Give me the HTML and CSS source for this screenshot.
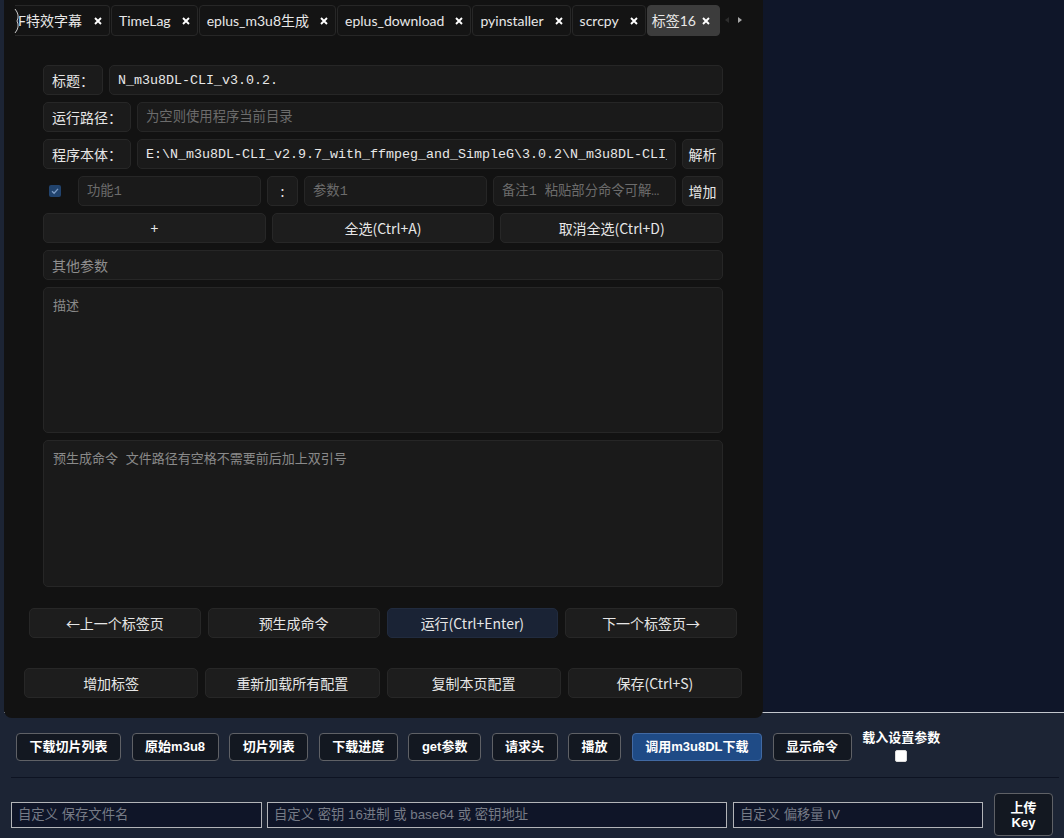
FILE: index.html
```html
<!DOCTYPE html>
<html lang="zh-CN">
<head>
<meta charset="utf-8">
<title>N_m3u8DL-CLI</title>
<link rel="stylesheet" href="styles.css">
</head>
<body>
<div class="page">
  <div class="viewer"></div>
  <div class="toolbar">
    <button class="tb">下载切片列表</button>
    <button class="tb">原始m3u8</button>
    <button class="tb">切片列表</button>
    <button class="tb">下载进度</button>
    <button class="tb">get参数</button>
    <button class="tb">请求头</button>
    <button class="tb">播放</button>
    <button class="tb primary">调用m3u8DL下载</button>
    <button class="tb">显示命令</button>
    <label class="load"><span>载入设置参数</span><input type="checkbox" class="wbox"></label>
  </div>
  <hr class="sep">
  <div class="keys">
    <input class="key k1" placeholder="自定义 保存文件名">
    <input class="key k2" placeholder="自定义 密钥 16进制 或 base64 或 密钥地址">
    <input class="key k3" placeholder="自定义 偏移量 IV">
    <button class="tb upload">上传<br>Key</button>
  </div>
</div>

<div class="dialog">
  <div class="tabbar">
    <svg class="edge" width="6" height="26" viewBox="0 0 6 26"><path d="M1 1 Q6 7 3 13 Q6 19 1 25" fill="none" stroke="#c8c8c8" stroke-width="1"/></svg>
    <div class="tabs">
      <div class="tab cut"><span>F特效字幕</span><svg class="x" width="8" height="8" viewBox="0 0 8 8"><path d="M1 1L7 7M7 1L1 7"/></svg></div>
      <div class="tab"><span>TimeLag</span><svg class="x" width="8" height="8" viewBox="0 0 8 8"><path d="M1 1L7 7M7 1L1 7"/></svg></div>
      <div class="tab"><span>eplus_m3u8生成</span><svg class="x" width="8" height="8" viewBox="0 0 8 8"><path d="M1 1L7 7M7 1L1 7"/></svg></div>
      <div class="tab"><span>eplus_download</span><svg class="x" width="8" height="8" viewBox="0 0 8 8"><path d="M1 1L7 7M7 1L1 7"/></svg></div>
      <div class="tab"><span>pyinstaller</span><svg class="x" width="8" height="8" viewBox="0 0 8 8"><path d="M1 1L7 7M7 1L1 7"/></svg></div>
      <div class="tab"><span>scrcpy</span><svg class="x" width="8" height="8" viewBox="0 0 8 8"><path d="M1 1L7 7M7 1L1 7"/></svg></div>
      <div class="tab active"><span>标签16</span><svg class="x" width="8" height="8" viewBox="0 0 8 8"><path d="M1 1L7 7M7 1L1 7"/></svg></div>
    </div>
    <div class="arrows">
      <svg width="4" height="6" viewBox="0 0 4 6"><path d="M4 0L0 3L4 6Z" fill="#2e2e2e"/></svg>
      <svg width="4" height="6" viewBox="0 0 4 6"><path d="M0 0L4 3L0 6Z" fill="#a8a8a8"/></svg>
    </div>
  </div>

  <div class="form">
    <div class="row">
      <span class="lbl">标题：</span>
      <input class="inp mono" value="N_m3u8DL-CLI_v3.0.2.">
    </div>
    <div class="row">
      <span class="lbl">运行路径：</span>
      <input class="inp mono" placeholder="为空则使用程序当前目录">
    </div>
    <div class="row">
      <span class="lbl">程序本体：</span>
      <input class="inp mono" value="E:\N_m3u8DL-CLI_v2.9.7_with_ffmpeg_and_SimpleG\3.0.2\N_m3u8DL-CLI_v3.0.2.exe">
      <button class="btn small">解析</button>
    </div>
    <div class="row params">
      <span class="chk"><svg width="12" height="12" viewBox="0 0 12 12"><rect x="0" y="0" width="12" height="12" rx="2" fill="#21436d"/><path d="M3 6.2L5.1 8.2L9 3.9" fill="none" stroke="#7d9cc4" stroke-width="1.3"/></svg></span>
      <input class="inp mono" placeholder="功能1">
      <span class="lbl colon">:</span>
      <input class="inp mono" placeholder="参数1">
      <input class="inp mono ell" placeholder="备注1 粘贴部分命令可解析参数">
      <button class="btn small">增加</button>
    </div>
    <div class="row three">
      <button class="btn">+</button>
      <button class="btn">全选(Ctrl+A)</button>
      <button class="btn">取消全选(Ctrl+D)</button>
    </div>
    <div class="row">
      <input class="inp other" placeholder="其他参数">
    </div>
    <textarea class="area a1" placeholder="描述"></textarea>
    <textarea class="area a2" placeholder="预生成命令 文件路径有空格不需要前后加上双引号"></textarea>
  </div>

  <div class="nav">
    <button class="btn">←上一个标签页</button>
    <button class="btn">预生成命令</button>
    <button class="btn run">运行(Ctrl+Enter)</button>
    <button class="btn">下一个标签页→</button>
  </div>
  <div class="actions">
    <button class="btn">增加标签</button>
    <button class="btn">重新加载所有配置</button>
    <button class="btn">复制本页配置</button>
    <button class="btn">保存(Ctrl+S)</button>
  </div>
</div>
</body>
</html>
```

FILE: styles.css
```css
* { box-sizing: border-box; }

html, body {
  margin: 0;
  padding: 0;
}

body {
  width: 1064px;
  height: 838px;
  overflow: hidden;
  background: #1c2434;
  font-family: "Liberation Sans", "Noto Sans CJK SC", sans-serif;
  position: relative;
}

/* ---------- page underneath ---------- */
.viewer {
  margin-left: 4px;
  height: 713px;
  background: #0f1629;
  border-bottom: 1px solid #c3c7cd;
}

.toolbar {
  display: flex;
  align-items: flex-start;
  gap: 10.6px;
  padding: 20px 0 0 16px;
}

.tb {
  height: 28px;
  padding: 0 12.5px;
  background: #131821;
  border: 1px solid #5f6166;
  border-radius: 4px;
  color: #ffffff;
  font: bold 13px/26px "Liberation Sans", "Noto Sans CJK SC", sans-serif;
  white-space: nowrap;
}

.tb.primary {
  background: #1f4b86;
  border-color: #4169a3;
}

.load {
  display: flex;
  flex-direction: column;
  align-items: center;
  margin-top: -3px;
  color: #ffffff;
  font: bold 13px/16px "Liberation Sans", "Noto Sans CJK SC", sans-serif;
}

.wbox {
  appearance: none;
  -webkit-appearance: none;
  width: 12px;
  height: 12px;
  margin: 4px 0 0 0;
  background: #ffffff;
  border: 1px solid #dcdcdc;
  border-radius: 2px;
}

.sep {
  margin: 15px 5px 0 11px;
  border: 0;
  border-top: 1px solid #0d1322;
  height: 0;
}

.keys {
  display: flex;
  align-items: center;
  padding: 15px 0 0 11px;
}

.key {
  height: 26px;
  background: #0f1528;
  border: 1px solid #b2b4b8;
  padding: 0 6px;
  color: #d0d0d0;
  font: 13.33px "Liberation Sans", "Noto Sans CJK SC", sans-serif;
  outline: none;
}

.key::placeholder { color: #767b86; }

.k1 { width: 251px; }
.k2 { width: 460px; margin-left: 5px; }
.k3 { width: 250px; margin-left: 6px; }

.upload {
  width: 59px;
  height: 43px;
  margin-left: 11px;
  padding: 0;
  line-height: 15px;
}

/* ---------- floating dialog ---------- */
.dialog {
  position: absolute;
  left: 4px;
  top: 0;
  width: 759px;
  height: 718px;
  background: #121212;
  border-radius: 0 0 8px 8px;
  font-family: "Noto Sans CJK SC", "Noto Sans", sans-serif;
  color: #e4e4e4;
}

.tabbar {
  position: relative;
  display: flex;
  align-items: center;
  height: 31px;
  margin-top: 5px;
}

.edge {
  position: absolute;
  left: 10px;
  top: 3px;
}

.tabs {
  display: flex;
  gap: 1px;
  margin-left: 11px;
  width: 706px;
  height: 31px;
  overflow: hidden;
}

.tab {
  flex: none;
  display: flex;
  align-items: center;
  gap: 11px;
  height: 31px;
  padding: 0 7px 0 7px;
  background: #141414;
  border: 1px solid #272727;
  border-radius: 4px;
  font-family: Lato, "Noto Sans CJK SC", sans-serif;
  font-size: 14px;
  line-height: 29px;
  color: #e8e8e8;
  white-space: nowrap;
}

.tab.cut {
  border-left: 0;
  border-radius: 0 4px 4px 0;
  padding-left: 3px;
  gap: 12px;
}

.tab.active {
  background: #3c3c3c;
  border-color: #3c3c3c;
  gap: 6px;
  padding: 0 9px 0 4px;
}

.x path {
  stroke: #ffffff;
  stroke-width: 1.9;
  fill: none;
}

.arrows {
  display: flex;
  align-items: center;
  gap: 9px;
  margin-left: 4px;
  margin-top: -2px;
}

.form {
  display: flex;
  flex-direction: column;
  gap: 7px;
  padding: 29px 40px 0 39px;
}

.row {
  display: flex;
  gap: 6px;
  height: 30px;
}

.lbl {
  flex: none;
  padding: 0 8px;
  height: 30px;
  line-height: 28px;
  background: #1b1b1b;
  border: 1px solid #272727;
  border-radius: 5px;
  font-size: 14px;
  color: #e6e6e6;
  white-space: nowrap;
}

.inp {
  flex: 1;
  min-width: 0;
  height: 30px;
  padding: 0 8px;
  background: #1a1a1a;
  border: 1px solid #262626;
  border-radius: 5px;
  color: #e8e8e8;
  outline: none;
}

.ell { text-overflow: ellipsis; }

.mono {
  font: 13.33px "Liberation Mono", "Noto Sans CJK SC", monospace;
}

.inp::placeholder { color: #6c6c6c; }

.other {
  font: 14px "Noto Sans CJK SC", sans-serif;
}

.other::placeholder { color: #8e8e8e; }

.params {
  display: grid;
  grid-template-columns: 29px 1fr 31px 1fr 1fr 41px;
  gap: 6px;
}

.chk {
  display: flex;
  align-items: center;
  padding-left: 6px;
}

.colon {
  padding: 0;
  text-align: center;
}

.three {
  display: grid;
  grid-template-columns: 1fr 1fr 1fr;
  gap: 6px;
}

.btn {
  height: 30px;
  padding: 0;
  background: #1d1d1d;
  border: 1px solid #272727;
  border-radius: 5px;
  color: #e6e6e6;
  font: 14px/28px "Noto Sans CJK SC", "Noto Sans", sans-serif;
  white-space: nowrap;
}

.btn.small {
  flex: none;
  width: 41px;
}

.btn.run {
  background: #1a2335;
  border-color: #212b3e;
}

.area {
  display: block;
  resize: none;
  padding: 9px 9px;
  background: #1a1a1a;
  border: 1px solid #262626;
  border-radius: 5px;
  color: #e6e6e6;
  font: 13px/20px "Liberation Mono", "Noto Sans CJK SC", monospace;
  outline: none;
}

.area::placeholder { color: #8a8a8a; }

.a1 { height: 146px; }
.a2 { height: 147px; }

.nav {
  display: grid;
  grid-template-columns: repeat(4, 1fr);
  gap: 7px;
  padding: 0 26px 0 25px;
  margin-top: 21px;
}

.actions {
  display: grid;
  grid-template-columns: repeat(4, 1fr);
  gap: 7px;
  padding: 0 21px 0 20px;
  margin-top: 30px;
}
```
